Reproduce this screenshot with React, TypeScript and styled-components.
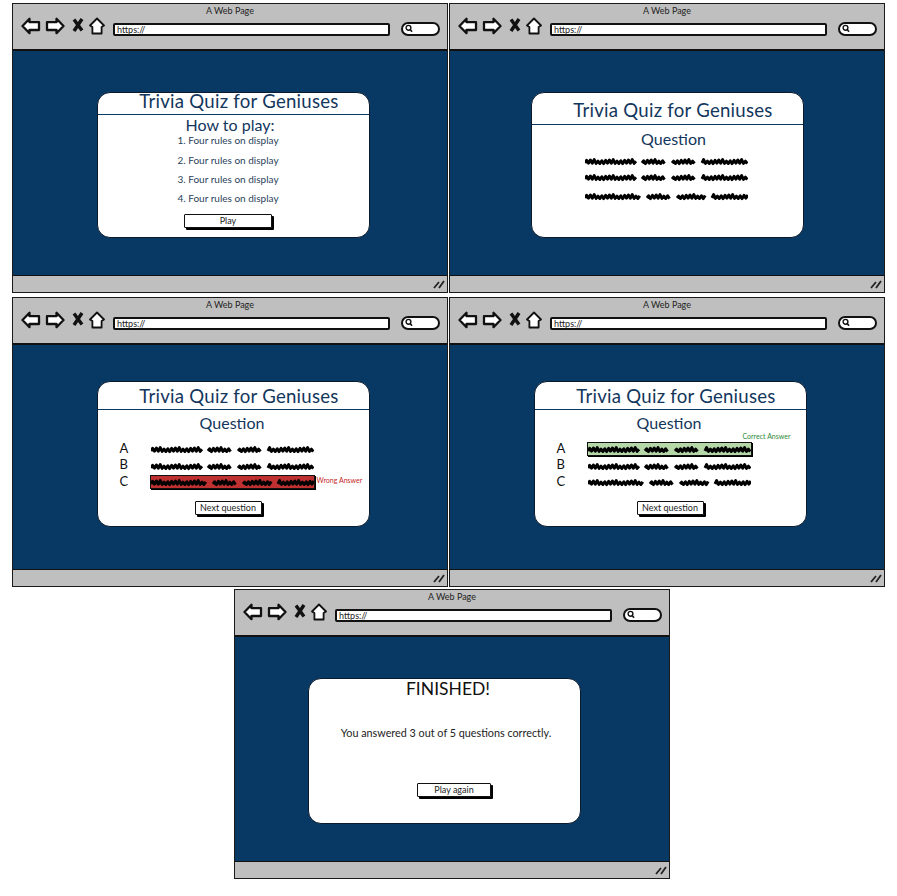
import React from 'react';
import styled, { createGlobalStyle } from 'styled-components';

const NAVY = '#083964';
const INK = '#13365c';

const GlobalStyle = createGlobalStyle`
  html, body {
    margin: 0;
    padding: 0;
    background: #fff;
    font-family: Lato, "Liberation Sans", sans-serif;
  }
`;

const Sheet = styled.div`
  display: flex;
  flex-direction: column;
  gap: 2px;
  width: 897px;
  height: 896px;
  padding: 3px 0 0 12px;
  box-sizing: border-box;
`;

const Row = styled.div<{ $gap?: number; $indent?: number }>`
  display: flex;
  gap: 1px;
  margin-bottom: ${p => p.$gap ?? 0}px;
  margin-left: ${p => p.$indent ?? 0}px;
`;

const Window = styled.section`
  display: flex;
  flex-direction: column;
  width: 436px;
  height: 290px;
  box-sizing: border-box;
  border: 1.5px solid #1a1a1a;
  background: #bfbfbf;
`;

const TopBar = styled.header`
  display: flex;
  flex-direction: column;
  height: 47px;
  flex: none;
  box-sizing: border-box;
  border-bottom: 2px solid #111;
`;

const PageTitle = styled.div`
  font-size: 9px;
  line-height: 11px;
  text-align: center;
  color: #222;
  padding-top: 1px;
`;

const Toolbar = styled.div`
  display: flex;
  align-items: center;
  margin-top: -1px;
  padding: 0 8px;
  height: 21px;
`;

const NavIcon = styled.svg<{ $w: number; $mr: number }>`
  width: ${p => p.$w}px;
  height: 18px;
  margin-right: ${p => p.$mr}px;
  flex: none;
`;

const UrlField = styled.div`
  flex: none;
  width: 277px;
  height: 13px;
  box-sizing: border-box;
  margin-top: 7px;
  padding-left: 2px;
  background: #fff;
  border: 2px solid #111;
  border-radius: 2px;
  font-size: 9px;
  line-height: 9px;
  color: #222;
`;

const SearchField = styled.div`
  display: flex;
  align-items: center;
  flex: none;
  width: 39px;
  height: 14px;
  box-sizing: border-box;
  margin: 6px 0 0 11px;
  padding-left: 2px;
  background: #fff;
  border: 2px solid #111;
  border-radius: 8px;
`;

const Content = styled.div`
  flex: 1;
  display: flex;
  align-items: center;
  justify-content: center;
  background: ${NAVY};
  padding-top: 2px;
`;

const Card = styled.div<{ $shift?: number; $lift?: number }>`
  display: flex;
  flex-direction: column;
  width: 273px;
  height: 146px;
  box-sizing: border-box;
  margin-left: ${p => p.$shift ?? 0}px;
  margin-bottom: ${p => p.$lift ?? 0}px;
  background: #fff;
  border: 1px solid #0b1a2c;
  border-radius: 13px;
`;

const CardHead = styled.div<{ $h: number; $off: number }>`
  flex: none;
  display: flex;
  align-items: center;
  justify-content: center;
  height: ${p => p.$h}px;
  box-sizing: border-box;
  padding: ${p => Math.max(p.$off, 0)}px 0 ${p => Math.max(-p.$off, 0)}px 12px;
  border-bottom: 1px solid ${NAVY};
  font-size: 18.6px;
  line-height: 16px;
  letter-spacing: 0.25px;
  color: ${INK};
  white-space: nowrap;
`;

const Heading = styled.div<{ $top: number; $right?: number; $left?: number; $size?: number }>`
  margin-top: ${p => p.$top}px;
  padding: 0 ${p => p.$right ?? 0}px 0 ${p => p.$left ?? 0}px;
  font-size: ${p => p.$size ?? 16}px;
  line-height: 20px;
  text-align: center;
  color: ${INK};
`;

const Rules = styled.ol`
  list-style: none;
  margin: -1px 0 0 0;
  padding: 0 0 0 80px;
  font-size: 10px;
  line-height: 13px;
  color: #2a3f5c;
`;

const Rule = styled.li`
  height: 19px;

  &:first-child {
    height: 20px;
  }
`;

const ActionButton = styled.button<{ $w: number; $top: number; $shift?: number }>`
  display: block;
  flex: none;
  width: ${p => p.$w}px;
  height: 14px;
  padding: 0;
  box-sizing: border-box;
  margin: ${p => p.$top}px auto 0 auto;
  position: relative;
  left: ${p => p.$shift ?? 0}px;
  background: #fff;
  border: 1.5px solid #111;
  border-radius: 1px;
  box-shadow: 2px 2px 0 #000;
  font-family: inherit;
  font-size: 9px;
  line-height: 10px;
  color: #222;
`;

const ScribbleStack = styled.div`
  display: flex;
  flex-direction: column;
  gap: 7px;
  margin: 8px 0 0 53px;

  & > svg:last-child {
    margin-top: 3px;
  }
`;

const ScribbleArt = styled.svg`
  display: block;
  flex: none;
  width: 163px;
  height: 9px;
`;

const AnswerList = styled.div`
  display: flex;
  flex-direction: column;
  margin-top: 8px;
  position: relative;
`;

const AnswerRow = styled.div<{ $left: number }>`
  display: grid;
  grid-template-columns: 30px 165px;
  height: 16.5px;
  align-items: center;
  padding-left: ${p => p.$left}px;
`;

const AnswerLetter = styled.span`
  margin-top: -3px;
  font-size: 13px;
  color: #111;
`;

const AnswerBar = styled.div<{ $tone?: 'wrong' | 'right' }>`
  height: 14px;
  display: flex;
  align-items: flex-end;
  box-sizing: border-box;
  padding-bottom: 1px;
  background: ${p => (p.$tone === 'wrong' ? '#bf3030' : p.$tone === 'right' ? '#b6d7a8' : 'transparent')};
  border: ${p => (p.$tone ? '1px solid #111' : '1px solid transparent')};
  box-shadow: ${p => (p.$tone ? '1px 1px 0 #000' : 'none')};
`;

const Verdict = styled.span<{ $tone: 'wrong' | 'right'; $left: number; $top: number }>`
  position: absolute;
  left: ${p => p.$left}px;
  top: ${p => p.$top}px;
  font-size: 7px;
  line-height: 8px;
  white-space: nowrap;
  color: ${p => (p.$tone === 'wrong' ? '#c62828' : '#2e8b3a')};
`;

const Finished = styled.div`
  margin-top: 0;
  padding-left: 8px;
  font-size: 17.5px;
  line-height: 20px;
  text-align: center;
  color: #111;
`;

const ResultLine = styled.p`
  margin: 27px 0 0 4px;
  font-size: 10.8px;
  line-height: 14px;
  text-align: center;
  color: #222;
`;

const BottomBar = styled.footer`
  flex: none;
  display: flex;
  justify-content: flex-end;
  align-items: center;
  height: 16px;
  margin-top: -1px;
  padding-right: 2px;
  border-top: 1.5px solid #111;
`;

const GripIcon = styled.svg`
  width: 12px;
  height: 10px;
`;

const BackIcon = () => (
  <NavIcon $w={20} $mr={4} viewBox="0 0 20 18">
    <path d="M1.5 9 L8.5 1.8 V5.2 H18 V13 H8.5 V16.2 Z" fill="#fff" stroke="#111" strokeWidth="2.3" strokeLinejoin="round" />
  </NavIcon>
);

const ForwardIcon = () => (
  <NavIcon $w={20} $mr={7} viewBox="0 0 20 18">
    <path d="M18.5 9 L11.5 1.8 V5.2 H2 V13 H11.5 V16.2 Z" fill="#fff" stroke="#111" strokeWidth="2.3" strokeLinejoin="round" />
  </NavIcon>
);

const CloseIcon = () => (
  <NavIcon $w={12} $mr={5} viewBox="0 0 12 18">
    <path d="M2 2.5 L10 13.5 M10 2 L2 14" fill="none" stroke="#111" strokeWidth="3.4" />
  </NavIcon>
);

const HomeIcon = () => (
  <NavIcon $w={16} $mr={8} viewBox="0 0 16 18">
    <path d="M8 1.5 L15 8.5 L12.6 10 V16.5 H3.4 V10 L1 8.5 Z" fill="#fff" stroke="#111" strokeWidth="1.8" strokeLinejoin="round" />
  </NavIcon>
);

const SearchGlyph = () => (
  <svg width="8" height="9" viewBox="0 0 8 9">
    <circle cx="3.5" cy="3.8" r="2.4" fill="none" stroke="#111" strokeWidth="1.4" />
    <path d="M5.2 5.6 L7 7.8" stroke="#111" strokeWidth="1.6" />
  </svg>
);

// zigzag for one word of greeked text
const wordPath = (from: number, to: number, seed: number) => {
  let d = `M${from} 6`;
  let i = 0;
  for (let x = from + 1.6; x < to; x += 1.9) {
    const up = i % 2 === 0;
    const lift = ((i * 7 + seed) % 5) * 0.4;
    d += ` L${x.toFixed(1)} ${up ? 2.6 + lift : 6.6 - lift * 0.3}`;
    i++;
  }
  return d;
};

const LINE_WORDS = [[0, 52], [57, 81], [87, 111], [117, 163]];
const LAST_WORDS = [[0, 56], [62, 85], [92, 121], [127, 163]];

const Scribble = ({ last }: { last?: boolean }) => (
  <ScribbleArt viewBox="0 0 163 9">
    {(last ? LAST_WORDS : LINE_WORDS).map(([a, b], i) => (
      <path key={a} d={wordPath(a, b, i + 2)} fill="none" stroke="#000" strokeWidth="3" strokeLinejoin="round" />
    ))}
  </ScribbleArt>
);

const BrowserWindow = ({ children, shift, lift }: { children: React.ReactNode; shift?: number; lift?: number }) => (
  <Window>
    <TopBar>
      <PageTitle>A Web Page</PageTitle>
      <Toolbar>
        <BackIcon />
        <ForwardIcon />
        <CloseIcon />
        <HomeIcon />
        <UrlField>https://</UrlField>
        <SearchField>
          <SearchGlyph />
        </SearchField>
      </Toolbar>
    </TopBar>
    <Content>
      <Card $shift={shift} $lift={lift}>{children}</Card>
    </Content>
    <BottomBar>
      <GripIcon viewBox="0 0 12 10">
        <path d="M1 9 L6 3 M6 9 L11 2" stroke="#222" strokeWidth="1.8" />
      </GripIcon>
    </BottomBar>
  </Window>
);

const TITLE = 'Trivia Quiz for Geniuses';

const Answers = ({ left, tone }: { left: number; tone: 'wrong' | 'right' }) => (
  <AnswerList>
    {['A', 'B', 'C'].map((letter, i) => {
      const marked = (tone === 'right' && i === 0) || (tone === 'wrong' && i === 2);
      return (
        <AnswerRow key={letter} $left={left}>
          <AnswerLetter>{letter}</AnswerLetter>
          <AnswerBar $tone={marked ? tone : undefined}>
            <Scribble last={i === 2} />
          </AnswerBar>
        </AnswerRow>
      );
    })}
    {tone === 'wrong' ? (
      <Verdict $tone="wrong" $left={219} $top={35}>Wrong Answer</Verdict>
    ) : (
      <Verdict $tone="right" $left={208} $top={-9}>Correct Answer</Verdict>
    )}
  </AnswerList>
);

export default function App() {
  return (
    <Sheet>
      <GlobalStyle />
      <Row $gap={2}>
        <BrowserWindow shift={6}>
          <CardHead $h={22} $off={-5}>{TITLE}</CardHead>
          <Heading $top={0} $right={6}>How to play:</Heading>
          <Rules>
            {[1, 2, 3, 4].map(n => (
              <Rule key={n}>{n}. Four rules on display</Rule>
            ))}
          </Rules>
          <ActionButton $w={88} $top={3} $shift={-5}>Play</ActionButton>
        </BrowserWindow>
        <BrowserWindow>
          <CardHead $h={32} $off={4}>{TITLE}</CardHead>
          <Heading $top={4} $left={13}>Question</Heading>
          <ScribbleStack>
            <Scribble />
            <Scribble />
            <Scribble last />
          </ScribbleStack>
        </BrowserWindow>
      </Row>
      <Row>
        <BrowserWindow shift={6} lift={9}>
          <CardHead $h={28} $off={0}>{TITLE}</CardHead>
          <Heading $top={3} $right={2}>Question</Heading>
          <Answers left={22} tone="wrong" />
          <ActionButton $w={67} $top={10} $shift={-5}>Next question</ActionButton>
        </BrowserWindow>
        <BrowserWindow shift={6} lift={9}>
          <CardHead $h={28} $off={0}>{TITLE}</CardHead>
          <Heading $top={3} $right={2}>Question</Heading>
          <Answers left={22} tone="right" />
          <ActionButton $w={67} $top={10}>Next question</ActionButton>
        </BrowserWindow>
      </Row>
      <Row $indent={222}>
        <BrowserWindow shift={-16}>
          <Finished>FINISHED!</Finished>
          <ResultLine>You answered 3 out of 5 questions correctly.</ResultLine>
          <ActionButton $w={74} $top={43} $shift={10}>Play again</ActionButton>
        </BrowserWindow>
      </Row>
    </Sheet>
  );
}
